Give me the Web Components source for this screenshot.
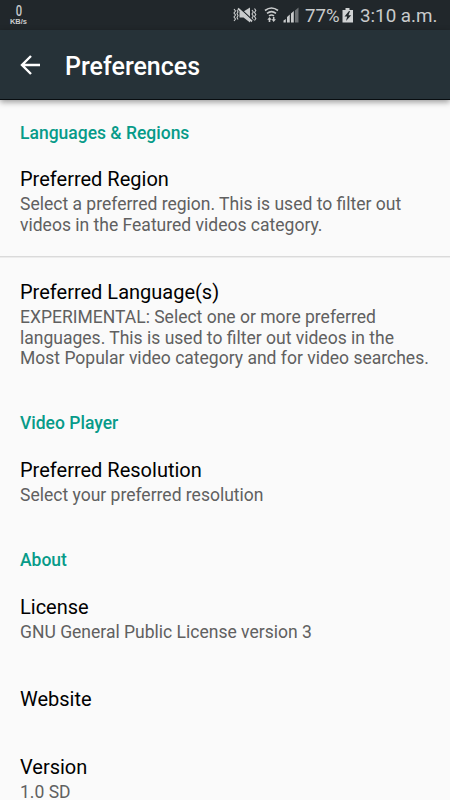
<!DOCTYPE html>
<html lang="en"><head><meta charset="utf-8"><title>Preferences</title>
<style>
html,body{margin:0;height:100%;overflow:hidden;background:#fafafa;font-family:Roboto,"Liberation Sans",sans-serif}
</style></head><body>
<preferences-screen></preferences-screen>
<script>
const define=(name,html)=>customElements.define(name,class extends HTMLElement{
  constructor(){super();const t=document.createElement('template');t.innerHTML=html;
    this.attachShadow({mode:'open'}).append(t.content.cloneNode(true));}
});
define('status-bar',`<style>
:host{display:flex;height:30px;background:#21272b;color:#c9cbcc;align-items:center;box-sizing:border-box;padding:0 12px 0 9px;justify-content:space-between}
.net{display:flex;flex-direction:column;align-items:center;width:19px;font:700 7.5px/8px "Liberation Sans",sans-serif;white-space:nowrap}
.net b{font:500 14px/14px Roboto,sans-serif;transform:scaleX(.8)}
.right{display:flex;height:30px;align-items:center}
svg{display:block;flex:none}
.t{font-size:18.800px;line-height:24px;padding-top:2px;white-space:nowrap}
.pct{width:37px;margin-left:5px;font-size:18.600px}.time{width:78px;margin-left:6px}
</style>
<div class="net"><b>0</b><span>KB/s</span></div>
<div class="right">
<svg width="80" height="30" viewBox="220 0 80 30">
<g fill="none" stroke="#c9cbcc" stroke-width="1.1"><path d="M234 9l1.500 2-1.500 2 1.500 2-1.500 2 1.500 2-1.500 2M237 10l1 2-1 1.500 1 2-1 2 1 2M252 10l1.300 2-1.300 2 1.300 2-1.300 2 1.300 2M254.500 8.500l1.300 2-1.300 2 1.300 2-1.300 2 1.300 2-1.300 2"/></g>
<path d="M239.500 11.500h4l6.500-4v15l-6.500-5h-4z" fill="#c9cbcc"/><path d="M238.800 7.300L253 20.500" stroke="#21272b" stroke-width="1.300"/><path d="M238 8.500L252 21.500" stroke="#c9cbcc" stroke-width="1.800"/>
<g fill="none" stroke="#c9cbcc" stroke-width="1.600"><path d="M265 10.500q6.500-5 13 0M267 13.400q4.500-3.500 9 0M269 16q2.500-2 5 0"/></g>
<path d="M267.300 19.800l2.200-2.700 2.200 2.700h-1.400v2.200h-1.600v-2.200zM271.500 19.200h1.400V17h1.600v2.200h1.400l-2.200 2.800z" fill="#c9cbcc"/>
<path fill="#c9cbcc" d="M283.500 22.500v-2l2.300-1.500v3.500zM287 22.500v-5.500l2.800-2.500v8zM291 22.500v-9l2.800-2.500v11.500z"/><path fill="#6d7174" d="M295 22.500V10.500l3.500-3v15z"/>
</svg>
<span class="t pct">77%</span>
<svg width="12" height="30" viewBox="0 0 12 30"><path d="M3.500 8h4v2h3.500v12.500H.5V10h3z" fill="#d0d2d3"/><path d="M7 11L2.500 16.500h2.700L4 21l5.200-5.800H6.500L8 11z" fill="#21272b"/></svg>
<span class="t time">3:10 a.m.</span></div>`);
define('app-bar',`<style>
:host{display:flex;position:relative;height:70px;box-sizing:border-box;align-items:center;background:#263238;color:#fff;padding-left:20px;border-bottom:1px solid #080d10;box-shadow:0 2px 6px rgba(0,0,0,.4)}
svg{flex:none}h1{font-size:25px;font-weight:500;line-height:30px;margin:4px 0 0 25px;white-space:nowrap}
</style><svg width="20" height="20" viewBox="0 0 20 20" fill="none" stroke="#fff" stroke-width="2.400"><path d="M20 10H2M11 1L2 10l9 9"/></svg><h1><slot></slot></h1>`);
define('preference-category',`<style>
:host{display:block;height:45px;box-sizing:border-box;padding:23px 20px 0;color:#079b89;font-size:17.500px;font-weight:500;line-height:20.500px;white-space:nowrap}
:host([first]){height:44px}
</style><slot></slot>`);
define('preference-item',`<style>
:host{display:block;min-height:68px;box-sizing:border-box;padding:23px 0 0 20px;color:#000;font-size:20px;line-height:24px;white-space:nowrap}
:host([divided]){border-bottom:1px solid #dadada;box-shadow:0 1px #ececec}
.summary{margin-top:3.300px;font-size:17.530px;line-height:20.500px;color:#606060}
::slotted([slot=summary]){display:block;padding-bottom:21.200px;white-space:pre-line}
:host([divided]) ::slotted([slot=summary]){padding-bottom:20.700px}
</style><div><slot></slot></div><div class="summary"><slot name="summary"></slot></div>`);
define('preferences-screen',`<style>:host{display:block;width:450px;height:800px;overflow:hidden;background:#fafafa}</style>
<status-bar></status-bar><app-bar>Preferences</app-bar>
<preference-category first>Languages &amp; Regions</preference-category>
<preference-item divided>Preferred Region<span slot="summary">Select a preferred region. This is used to filter out
videos in the Featured videos category.</span></preference-item>
<preference-item>Preferred Language(s)<span slot="summary">EXPERIMENTAL: Select one or more preferred
languages. This is used to filter out videos in the
Most Popular video category and for video searches.</span></preference-item>
<preference-category>Video Player</preference-category>
<preference-item>Preferred Resolution<span slot="summary">Select your preferred resolution</span></preference-item>
<preference-category>About</preference-category>
<preference-item>License<span slot="summary">GNU General Public License version 3</span></preference-item>
<preference-item>Website</preference-item>
<preference-item>Version<span slot="summary">1.0 SD</span></preference-item>`);
</script></body></html>
